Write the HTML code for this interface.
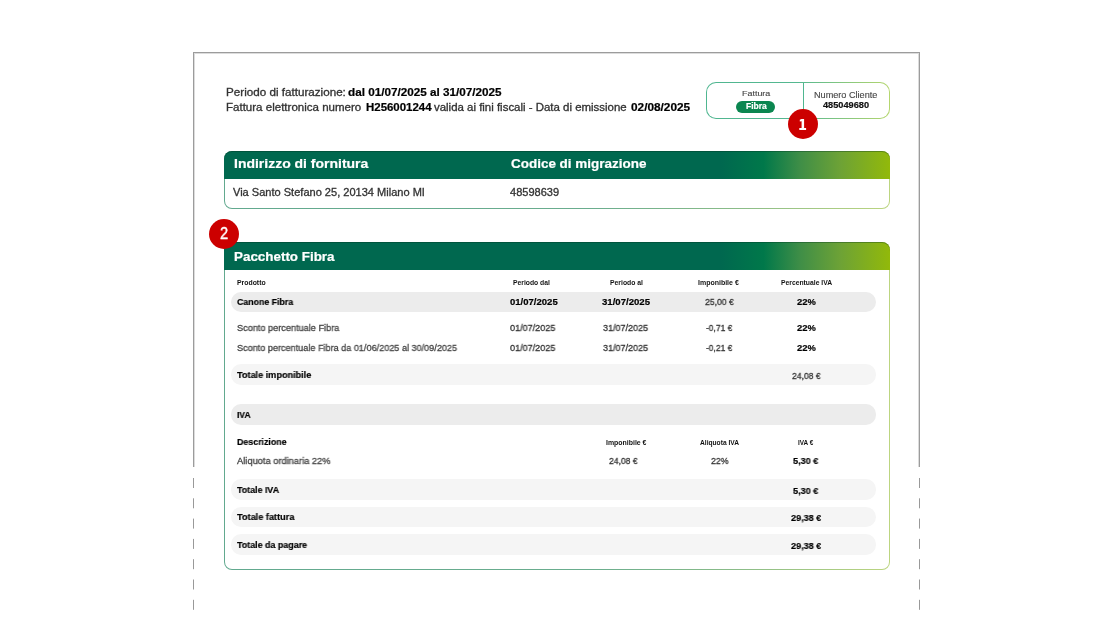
<!DOCTYPE html>
<html><head><meta charset="utf-8">
<style>
html,body{margin:0;padding:0;background:#fff;}
body{width:1113px;height:640px;position:relative;overflow:hidden;font-family:"Liberation Sans",sans-serif;}
.a{position:absolute;}
.t{position:absolute;white-space:nowrap;transform-origin:0 0;font-weight:400;will-change:transform;-webkit-text-stroke:0.3px currentColor;}
.b{font-weight:700;-webkit-text-stroke:0.2px currentColor;}
.frame-top{left:193px;top:52px;width:727px;height:1px;background:#9c9c9c;}
.vs{width:1px;background:#9c9c9c;}
.gb{background:linear-gradient(90deg,#62a98f 0%,#6aad8e 55%,#8cbd88 78%,#bcd580 100%);}
.gbb{background:linear-gradient(90deg,#4fb690 0%,#55b890 50%,#b5d66e 100%);}
.hdr{box-shadow:inset 0 1px 0 rgba(0,50,30,.35);background:linear-gradient(90deg,#00684f 0%,#00684f 74.6%,#00784a 81%,#3f8e47 86.5%,#6da236 92.5%,#92b90a 100%);}
.row1{background:#ececec;border-radius:10px;}
.row2{background:#f5f5f5;border-radius:10px;}
.red{background:#cc0000;border-radius:50%;}
</style></head><body>
<!-- frame -->
<div class="a frame-top"></div>
<div class="a vs" style="left:193px;top:52px;height:415px"></div>
<div class="a vs" style="left:919px;top:52px;height:415px"></div>
<div class="a" style="left:194px;top:53px;width:725px;height:1px;background:#dcdcdc"></div>
<div class="a" style="left:194px;top:54px;width:1px;height:413px;background:#dcdcdc"></div>
<div class="a" style="left:918px;top:54px;width:1px;height:413px;background:#dcdcdc"></div>
<svg class="a" style="left:0;top:0" width="1113" height="640">
<g stroke="#999" stroke-width="1">
<line x1="193.5" y1="478" x2="193.5" y2="610" stroke-dasharray="10 10.3"/>
<line x1="919.5" y1="478" x2="919.5" y2="610" stroke-dasharray="10 10.3"/>
</g>
</svg>

<!-- badge box -->
<div class="a gbb" style="left:706px;top:82px;width:184px;height:37px;border-radius:10px"></div>
<div class="a" style="left:707px;top:83px;width:182px;height:35px;border-radius:9px;background:#fff"></div>
<div class="a" style="left:803px;top:83px;width:1px;height:35px;background:#4fb690"></div>
<div class="a" style="left:736px;top:100.5px;width:38.5px;height:12.8px;border-radius:6.4px;background:#0b8650"></div>
<div class="a red" style="left:787.6px;top:109px;width:30px;height:30px"></div>
<svg class="a" style="left:0;top:0;overflow:visible" width="1" height="1"><path fill="#fff" d="M801.6,118.9 L804.1,118.9 L804.1,128.1 L806.1,128.1 L806.1,129.9 L799.3,129.9 L799.3,128.1 L801.6,128.1 L801.6,121.2 L799.8,121.4 L799.8,119.8 Z"/></svg>

<!-- address box -->
<div class="a gb" style="left:224px;top:151px;width:666px;height:58px;border-radius:8px"></div>
<div class="a" style="left:225px;top:152px;width:664px;height:56px;border-radius:7px;background:#fff"></div>
<div class="a hdr" style="left:224px;top:151px;width:666px;height:27.5px;border-radius:8px 8px 0 0"></div>

<!-- pacchetto box -->
<div class="a gb" style="left:224px;top:242px;width:666px;height:328px;border-radius:8px"></div>
<div class="a" style="left:225px;top:243px;width:664px;height:326px;border-radius:7px;background:#fff"></div>
<div class="a hdr" style="left:224px;top:242px;width:666px;height:27.5px;border-radius:8px 8px 0 0"></div>
<div class="a red" style="left:209px;top:218.5px;width:30px;height:30px"></div>

<div class="a row1" style="left:230.6px;top:291.8px;width:645.2px;height:20px"></div>
<div class="a row2" style="left:230.6px;top:364px;width:645.2px;height:20.6px"></div>
<div class="a row1" style="left:230.6px;top:404.4px;width:645.2px;height:20.6px"></div>
<div class="a row2" style="left:230.6px;top:479.2px;width:645.2px;height:20.5px"></div>
<div class="a row2" style="left:230.6px;top:506.5px;width:645.2px;height:20.5px"></div>
<div class="a row2" style="left:230.6px;top:533.8px;width:645.2px;height:20.9px"></div>

<div class="t" style="left:225.70px;top:88px;font-size:10.20px;line-height:10.20px;color:#333;transform:scaleX(1.1439)">Periodo di fatturazione:</div>
<div class="t b" style="left:348.10px;top:88px;font-size:10.20px;line-height:10.20px;color:#000;transform:scaleX(1.1479)">dal 01/07/2025 al 31/07/2025</div>
<div class="t" style="left:225.70px;top:103px;font-size:10.20px;line-height:10.20px;color:#333;transform:scaleX(1.1321)">Fattura elettronica numero</div>
<div class="t b" style="left:365.80px;top:103px;font-size:10.20px;line-height:10.20px;color:#000;transform:scaleX(1.1231)">H256001244</div>
<div class="t" style="left:434.40px;top:103px;font-size:10.20px;line-height:10.20px;color:#333;transform:scaleX(1.1228)">valida ai fini fiscali - Data di emissione</div>
<div class="t b" style="left:630.90px;top:103px;font-size:10.20px;line-height:10.20px;color:#000;transform:scaleX(1.1605)">02/08/2025</div>
<div class="t" style="-webkit-text-stroke:0.12px currentColor;left:741.60px;top:90px;font-size:7.80px;line-height:7.80px;color:#454545;transform:scaleX(1.1452)">Fattura</div>
<div class="t b" style="left:745.70px;top:102px;font-size:8.40px;line-height:8.40px;color:#fff;transform:scaleX(1.0145)">Fibra</div>
<div class="t" style="-webkit-text-stroke:0.12px currentColor;left:814.30px;top:91px;font-size:8.70px;line-height:8.70px;color:#454545;transform:scaleX(1.0497)">Numero Cliente</div>
<div class="t b" style="left:822.90px;top:101px;font-size:8.40px;line-height:8.40px;color:#111;transform:scaleX(1.1000)">485049680</div>
<div class="t b" style="left:233.90px;top:158px;font-size:12.70px;line-height:12.70px;color:#fff;transform:scaleX(1.1015)">Indirizzo di fornitura</div>
<div class="t b" style="left:510.50px;top:158px;font-size:12.70px;line-height:12.70px;color:#fff;transform:scaleX(1.0611)">Codice di migrazione</div>
<div class="t" style="left:233.30px;top:188px;font-size:10.30px;line-height:10.30px;color:#333;transform:scaleX(1.0721)">Via Santo Stefano 25, 20134 Milano MI</div>
<div class="t" style="left:509.80px;top:188px;font-size:10.30px;line-height:10.30px;color:#333;transform:scaleX(1.0721)">48598639</div>
<div class="t" style="-webkit-text-stroke:0.45px currentColor;left:219.90px;top:226px;font-size:16.60px;line-height:16.60px;color:#fff;transform:scaleX(0.8804)">2</div>
<div class="t b" style="left:233.60px;top:251px;font-size:12.00px;line-height:12.00px;color:#fff;transform:scaleX(1.1164)">Pacchetto Fibra</div>
<div class="t b" style="-webkit-text-stroke:0px;left:237.20px;top:280px;font-size:6.40px;line-height:6.40px;color:#111;transform:scaleX(1.0749)">Prodotto</div>
<div class="t b" style="-webkit-text-stroke:0px;left:513.00px;top:280px;font-size:6.40px;line-height:6.40px;color:#111;transform:scaleX(1.0602)">Periodo dal</div>
<div class="t b" style="-webkit-text-stroke:0px;left:609.90px;top:280px;font-size:6.40px;line-height:6.40px;color:#111;transform:scaleX(1.0680)">Periodo al</div>
<div class="t b" style="-webkit-text-stroke:0px;left:698.00px;top:280px;font-size:6.40px;line-height:6.40px;color:#111;transform:scaleX(1.0938)">Imponibile €</div>
<div class="t b" style="-webkit-text-stroke:0px;left:780.80px;top:280px;font-size:6.40px;line-height:6.40px;color:#111;transform:scaleX(1.0600)">Percentuale IVA</div>
<div class="t b" style="left:237.20px;top:297px;font-size:9.40px;line-height:9.40px;color:#000;transform:scaleX(0.9368)">Canone Fibra</div>
<div class="t b" style="left:509.50px;top:297px;font-size:9.40px;line-height:9.40px;color:#000;transform:scaleX(1.0170)">01/07/2025</div>
<div class="t b" style="left:601.90px;top:297px;font-size:9.40px;line-height:9.40px;color:#000;transform:scaleX(1.0234)">31/07/2025</div>
<div class="t" style="left:704.90px;top:297px;font-size:9.40px;line-height:9.40px;color:#333;transform:scaleX(0.9204)">25,00 €</div>
<div class="t b" style="left:796.80px;top:297px;font-size:9.40px;line-height:9.40px;color:#000;transform:scaleX(1.0000)">22%</div>
<div class="t" style="left:237.20px;top:323px;font-size:9.40px;line-height:9.40px;color:#454545;transform:scaleX(0.9762)">Sconto percentuale Fibra</div>
<div class="t" style="left:509.50px;top:323px;font-size:9.40px;line-height:9.40px;color:#333;transform:scaleX(0.9660)">01/07/2025</div>
<div class="t" style="left:603.40px;top:323px;font-size:9.40px;line-height:9.40px;color:#333;transform:scaleX(0.9596)">31/07/2025</div>
<div class="t" style="left:706.30px;top:323px;font-size:9.40px;line-height:9.40px;color:#333;transform:scaleX(0.9010)">-0,71 €</div>
<div class="t b" style="left:796.80px;top:323px;font-size:9.40px;line-height:9.40px;color:#000;transform:scaleX(1.0000)">22%</div>
<div class="t" style="left:237.20px;top:343px;font-size:9.40px;line-height:9.40px;color:#454545;transform:scaleX(0.9705)">Sconto percentuale Fibra da 01/06/2025 al 30/09/2025</div>
<div class="t" style="left:509.50px;top:343px;font-size:9.40px;line-height:9.40px;color:#333;transform:scaleX(0.9660)">01/07/2025</div>
<div class="t" style="left:603.40px;top:343px;font-size:9.40px;line-height:9.40px;color:#333;transform:scaleX(0.9596)">31/07/2025</div>
<div class="t" style="left:706.30px;top:343px;font-size:9.40px;line-height:9.40px;color:#333;transform:scaleX(0.9010)">-0,21 €</div>
<div class="t b" style="left:796.80px;top:343px;font-size:9.40px;line-height:9.40px;color:#000;transform:scaleX(1.0000)">22%</div>
<div class="t b" style="left:237.20px;top:370px;font-size:9.40px;line-height:9.40px;color:#000;transform:scaleX(0.9726)">Totale imponibile</div>
<div class="t" style="left:791.75px;top:371px;font-size:9.40px;line-height:9.40px;color:#333;transform:scaleX(0.9156)">24,08 €</div>
<div class="t b" style="left:237.20px;top:410px;font-size:9.40px;line-height:9.40px;color:#000;transform:scaleX(0.9067)">IVA</div>
<div class="t b" style="left:237.20px;top:437px;font-size:9.40px;line-height:9.40px;color:#000;transform:scaleX(0.9413)">Descrizione</div>
<div class="t b" style="-webkit-text-stroke:0px;left:605.70px;top:440px;font-size:6.40px;line-height:6.40px;color:#111;transform:scaleX(1.0858)">Imponibile €</div>
<div class="t b" style="-webkit-text-stroke:0px;left:699.60px;top:440px;font-size:6.40px;line-height:6.40px;color:#111;transform:scaleX(1.0399)">Aliquota IVA</div>
<div class="t b" style="-webkit-text-stroke:0px;left:797.80px;top:440px;font-size:6.40px;line-height:6.40px;color:#111;transform:scaleX(0.9935)">IVA €</div>
<div class="t" style="left:237.20px;top:456px;font-size:9.40px;line-height:9.40px;color:#454545;transform:scaleX(0.9915)">Aliquota ordinaria 22%</div>
<div class="t" style="left:609.10px;top:456px;font-size:9.40px;line-height:9.40px;color:#333;transform:scaleX(0.9140)">24,08 €</div>
<div class="t" style="left:710.60px;top:456px;font-size:9.40px;line-height:9.40px;color:#333;transform:scaleX(0.9309)">22%</div>
<div class="t b" style="left:793.30px;top:456px;font-size:9.40px;line-height:9.40px;color:#000;transform:scaleX(0.9732)">5,30 €</div>
<div class="t b" style="left:237.20px;top:485px;font-size:9.40px;line-height:9.40px;color:#000;transform:scaleX(0.9462)">Totale IVA</div>
<div class="t b" style="left:793.30px;top:486px;font-size:9.40px;line-height:9.40px;color:#000;transform:scaleX(0.9732)">5,30 €</div>
<div class="t b" style="left:237.20px;top:512px;font-size:9.40px;line-height:9.40px;color:#000;transform:scaleX(0.9779)">Totale fattura</div>
<div class="t b" style="left:791.00px;top:513px;font-size:9.40px;line-height:9.40px;color:#000;transform:scaleX(0.9682)">29,38 €</div>
<div class="t b" style="left:237.20px;top:540px;font-size:9.40px;line-height:9.40px;color:#000;transform:scaleX(0.9500)">Totale da pagare</div>
<div class="t b" style="left:791.00px;top:541px;font-size:9.40px;line-height:9.40px;color:#000;transform:scaleX(0.9682)">29,38 €</div>
</body></html>
